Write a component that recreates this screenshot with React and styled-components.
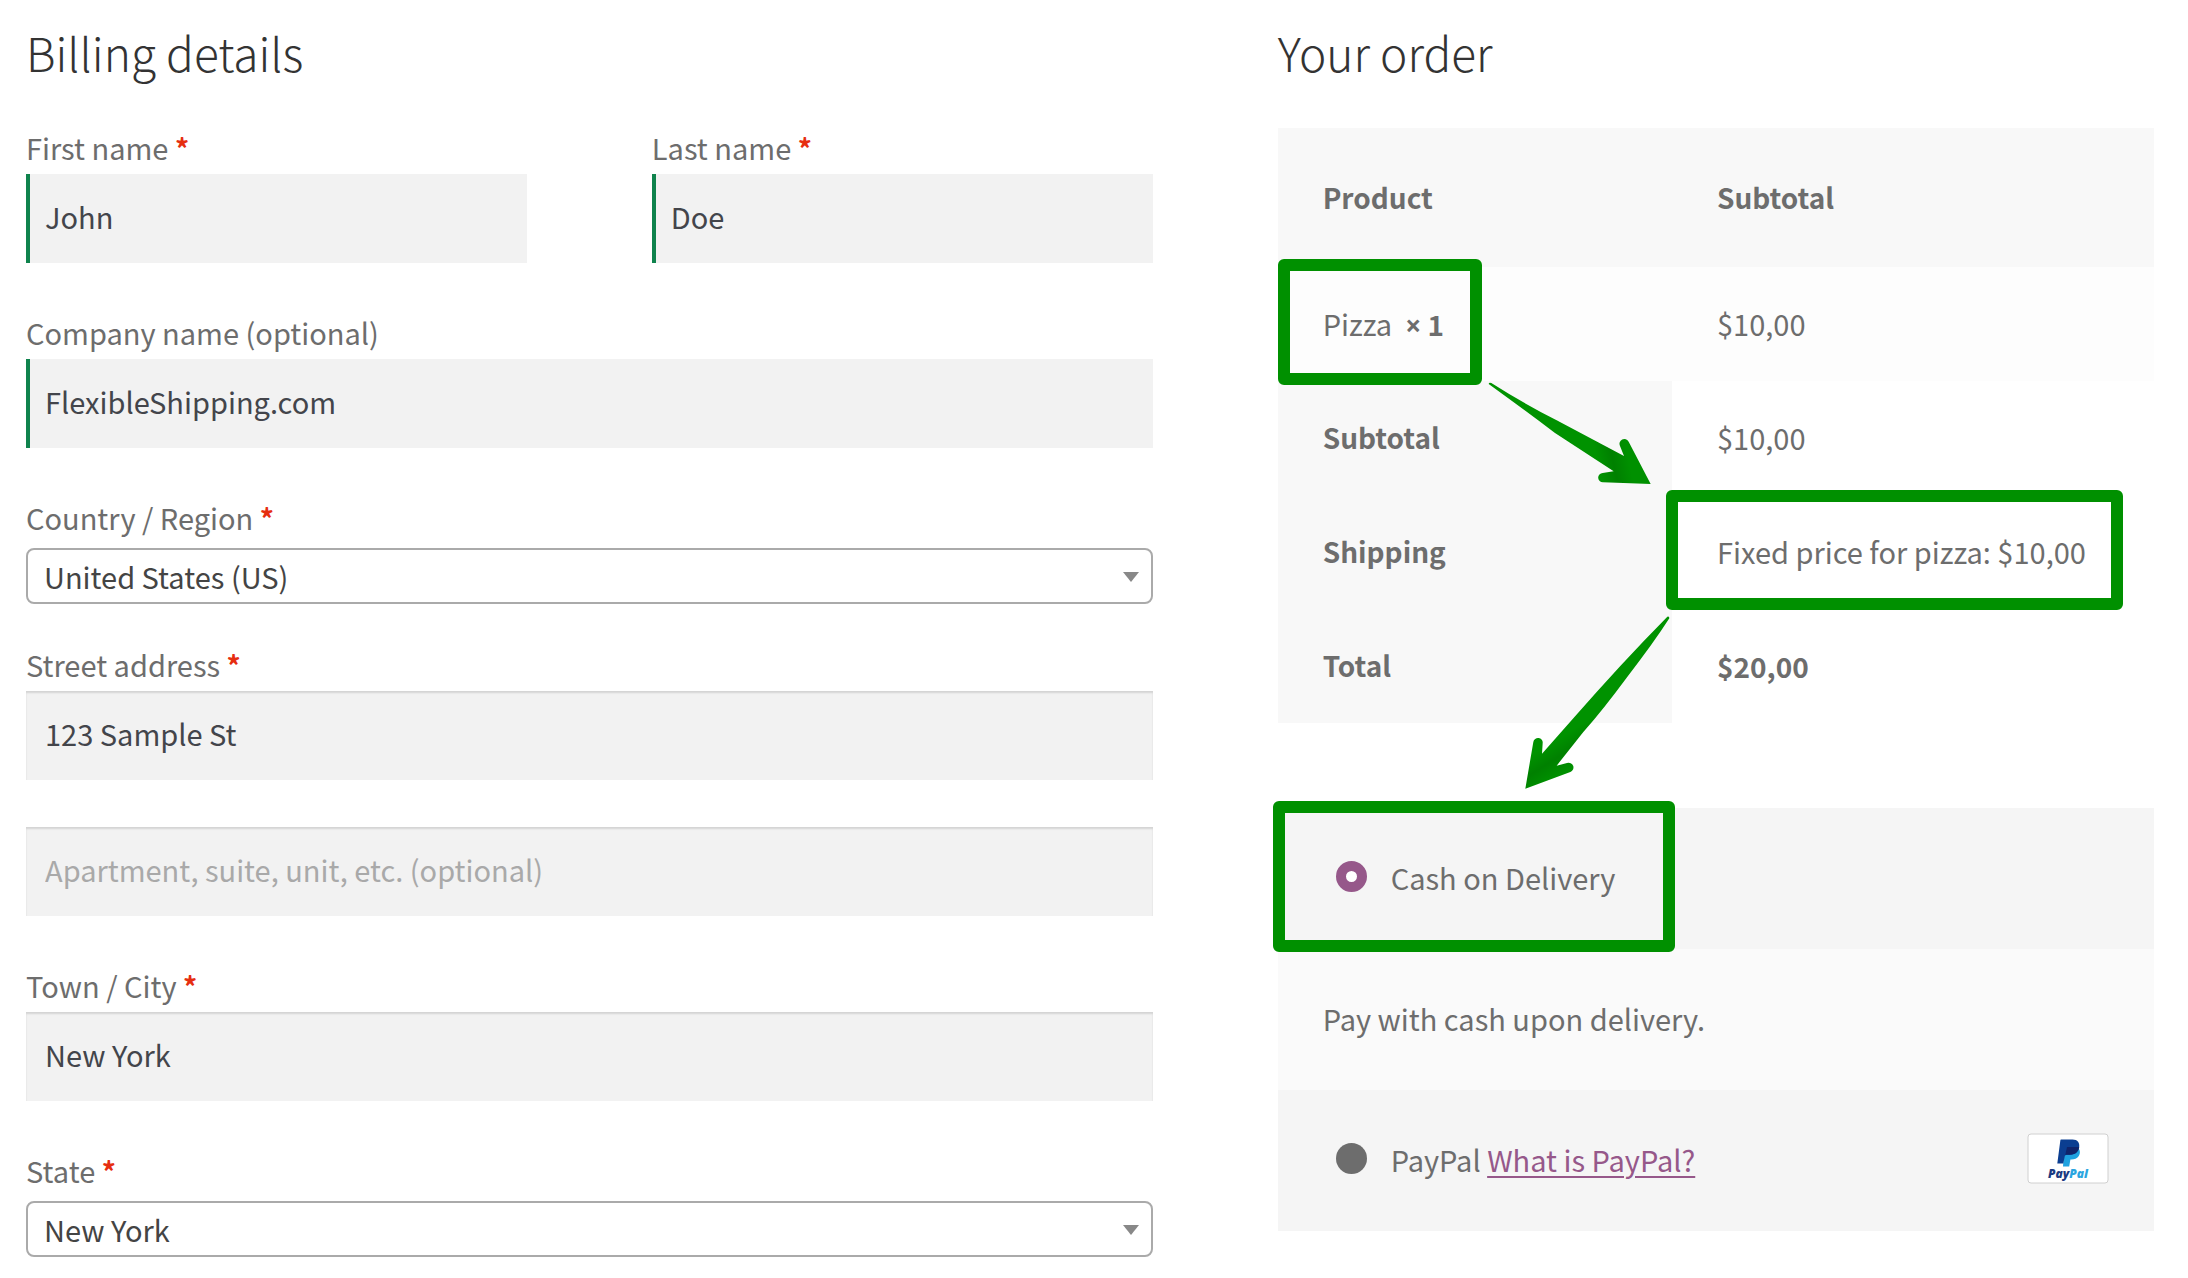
import React, { useState } from 'react'
import styled, { createGlobalStyle, css } from 'styled-components'

const items = [{ id: 1, name: 'Pizza', quantity: 1, total: '$10,00' }]

const countries = ['United States (US)', 'Canada', 'Poland']
const states = ['New York', 'California', 'Texas']

const Field = ({ id, label, required, children, ...rest }) => (
  <FormRow {...rest}>
    <Label htmlFor={id}>
      {label} {required && <Required title='required'>*</Required>}
    </Label>
    {children}
  </FormRow>
)

const SelectBox = ({ id, options, value, onChange }) => (
  <SelectWrap>
    <Select id={id} name={id} value={value} onChange={onChange}>
      {options.map((option) => (
        <option key={option}>{option}</option>
      ))}
    </Select>
    <Caret />
  </SelectWrap>
)

const PayPalMark = () => (
  <PayPalCard viewBox='0 0 82 51' role='img' aria-label='PayPal'>
    <rect x='1' y='1' width='80' height='49' rx='3' fill='#fff' stroke='#d0d0d0' strokeWidth='1' />
    <path d='M37.5 14 h12.500 c3.200 2.200 3.800 6 1.600 9.300 c-1.600 2.300 -4.200 3.200 -7.200 3.200 h-1 l-1.200 7 h-6.200 z' fill='#1fa2e0' />
    <path d='M34.200 6.500 h11.300 c5 0 7.700 3.500 6.600 8.200 c-1.100 5 -4.700 7 -9.300 7 h-3.300 c-1 0 -1.500 .6 -1.700 1.400 l-1.500 7.400 h-6 l3 -22.700 c.1 -.8 .4 -1.300 .9 -1.300 z' fill='#0b3e91' />
    <path d='M40 14 h12.200 c-1 5.500 -4.700 7.700 -9.400 7.700 h-3.300 c-.6 0 -1 .3 -1.300 .7 z' fill='#10246a' />
    <text x='41' y='45' textAnchor='middle' fontSize='12'>
      <tspan fill='#1b3a80'>Pay</tspan>
      <tspan fill='#2aa5e0'>Pal</tspan>
    </text>
  </PayPalCard>
)

const Arrows = () => (
  <ArrowLayer viewBox='126 60 594 1260' aria-hidden='true'>
    <defs>
      <linearGradient id='down' gradientUnits='userSpaceOnUse' x1='480' y1='340' x2='570' y2='320'>
        <stop offset='0' stopColor='#009200' />
        <stop offset='.5' stopColor='#008000' />
        <stop offset='1' stopColor='#009000' />
      </linearGradient>
      <linearGradient id='back' gradientUnits='userSpaceOnUse' x1='300' y1='1170' x2='350' y2='1250'>
        <stop offset='0' stopColor='#009200' />
        <stop offset='.5' stopColor='#008000' />
        <stop offset='1' stopColor='#009000' />
      </linearGradient>
    </defs>
    <path
      fill='url(#down)'
      d='M146 72 Q147 66 154 69 Q250 130 350 181 L552 288 L540 258 A14 14 0 0 1 566 245 L632 372 L489 367 A14 14 0 0 1 488 339 L521 334 L345 219 Q240 140 146 72 Z'
    />
    <path
      fill='url(#back)'
      d='M682 770 Q688 768 688 775 Q640 850 560 953 Q490 1048 430 1116 L350 1217 L381 1209 A14 14 0 0 1 391 1236 L256 1286 L280 1146 A14 14 0 0 1 308 1150 L306 1181 L400 1075 Q540 914 682 770 Z'
    />
  </ArrowLayer>
)

export default function App() {
  const [form, setForm] = useState({
    firstName: 'John',
    lastName: 'Doe',
    company: 'FlexibleShipping.com',
    country: 'United States (US)',
    street: '123 Sample St',
    apartment: '',
    city: 'New York',
    state: 'New York',
  })
  const [payment, setPayment] = useState('cod')

  // every field is keyed by its id
  const bind = (id) => ({
    id,
    name: id,
    value: form[id],
    onChange: (e) => setForm({ ...form, [id]: e.target.value }),
  })

  return (
    <>
      <GlobalStyle />
      <Checkout>
        <section>
          <Heading>Billing details</Heading>
          <NameRow>
            <Field id='firstName' label='First name' required>
              <Input type='text' $valid {...bind('firstName')} />
            </Field>
            <Field id='lastName' label='Last name' required>
              <Input type='text' $valid {...bind('lastName')} />
            </Field>
          </NameRow>
          <Field id='company' label='Company name (optional)'>
            <Input type='text' $valid {...bind('company')} />
          </Field>
          <Field id='country' label='Country / Region' required $gap='35px'>
            <SelectBox options={countries} {...bind('country')} />
          </Field>
          <Field id='street' label='Street address' required $gap='47px'>
            <Input type='text' {...bind('street')} />
          </Field>
          <FormRow>
            <Input
              type='text'
              aria-label='Apartment, suite, unit, etc. (optional)'
              placeholder='Apartment, suite, unit, etc. (optional)'
              {...bind('apartment')}
            />
          </FormRow>
          <Field id='city' label='Town / City' required>
            <Input type='text' {...bind('city')} />
          </Field>
          <Field id='state' label='State' required $gap='0'>
            <SelectBox options={states} {...bind('state')} />
          </Field>
        </section>

        <Order>
          <Heading $order>Your order</Heading>
          <OrderTable>
            <thead>
              <tr>
                <th>Product</th>
                <th>Subtotal</th>
              </tr>
            </thead>
            <tbody>
              {items.map((item) => (
                <tr key={item.id}>
                  <td>
                    {item.name}&nbsp;{' '}
                    <strong>
                      <Times>×</Times> {item.quantity}
                    </strong>
                    <ProductMark />
                  </td>
                  <td>{item.total}</td>
                </tr>
              ))}
            </tbody>
            <tfoot>
              <tr>
                <th>Subtotal</th>
                <td>$10,00</td>
              </tr>
              <tr>
                <th>Shipping</th>
                <td>
                  Fixed price for pizza: $10,00
                  <ShippingMark />
                </td>
              </tr>
              <tr>
                <th>Total</th>
                <td>
                  <strong>$20,00</strong>
                </td>
              </tr>
            </tfoot>
          </OrderTable>

          <Payment>
            <Method>
              <Radio
                type='radio'
                name='payment'
                id='cod'
                checked={payment === 'cod'}
                onChange={() => setPayment('cod')}
              />
              <label htmlFor='cod'>Cash on Delivery</label>
              <PaymentMark />
            </Method>
            <PaymentInfo>Pay with cash upon delivery.</PaymentInfo>
            <Method>
              <Radio
                type='radio'
                name='payment'
                id='paypal'
                checked={payment === 'paypal'}
                onChange={() => setPayment('paypal')}
              />
              <span>
                <label htmlFor='paypal'>PayPal</label> <a href='#paypal'>What is PayPal?</a>
              </span>
              <PayPalMark />
            </Method>
          </Payment>
          <Arrows />
        </Order>
      </Checkout>
    </>
  )
}

const GlobalStyle = createGlobalStyle`
  * {
    box-sizing: border-box;
  }
  body {
    margin: 0;
    background: #fff;
    color: #6d6d6d;
    font-family: 'Noto Sans CJK SC', 'Noto Sans', sans-serif;
    font-size: 29px;
    line-height: 52px;
  }
  a {
    color: #96588a;
    text-decoration: underline;
    text-decoration-thickness: 2px;
    text-underline-offset: 4px;
  }
`

const Checkout = styled.main`
  display: grid;
  grid-template-columns: 9fr 7fr;
  column-gap: 125px;
  align-items: start;
  padding: 20px 34px 20px 26px;
`

const Heading = styled.h3`
  margin: 0 0 ${(props) => (props.$order ? '44px' : '38px')};
  color: #333;
  font-size: 46px;
  font-weight: 300;
  line-height: 64px;
`

const NameRow = styled.div`
  display: grid;
  grid-template-columns: 1fr 1fr;
  column-gap: 125px;
`

const FormRow = styled.div`
  display: flex;
  flex-direction: column;
  margin-bottom: ${(props) => props.$gap || '44px'};
`

const Label = styled.label`
  display: block;
  padding-bottom: 2px;
  line-height: 50px;
`

const Required = styled.span`
  color: #e62e10;
  font-size: 28px;
  font-weight: 700;
  line-height: 1;
`

const Input = styled.input`
  width: 100%;
  height: 89px;
  padding: 0 19px 5px;
  border: 0;
  border-radius: 0;
  outline: 0;
  background: #f2f2f2;
  box-shadow: inset 0 2px 2px rgba(0, 0, 0, 0.125);
  color: #43454b;
  font: inherit;

  ${(props) =>
    props.$valid &&
    css`
      box-shadow: inset 4px 0 0 #0f834d;
    `}

  &::placeholder {
    color: #a9a9a9;
    opacity: 1;
  }
`

const SelectWrap = styled.div`
  position: relative;
  margin-top: 4px;
`

const Select = styled.select`
  display: block;
  width: 100%;
  height: 56px;
  padding: 0 56px 0 16px;
  border: 2px solid #aaa;
  border-radius: 8px;
  outline: 0;
  appearance: none;
  background: #fff;
  color: #444;
  font: inherit;
`

const Caret = styled.span`
  position: absolute;
  top: 24px;
  right: 14px;
  border: solid transparent;
  border-width: 10px 8px 0;
  border-top-color: #888;
  pointer-events: none;
`

const Order = styled.section`
  position: relative;
`

const OrderTable = styled.table`
  width: 100%;
  margin-bottom: 85px;
  border-collapse: collapse;
  table-layout: fixed;

  th,
  td {
    position: relative;
    padding: 30px 45px 32px;
    text-align: left;
    white-space: nowrap;
  }
  th {
    background: #f8f8f8;
    font-weight: 700;
  }
  th,
  strong {
    font-size: 28px;
  }
  strong {
    line-height: 1;
  }
  thead th {
    height: 139px;
  }
  thead th:first-child {
    width: 45%;
  }
  tbody td {
    background: #fdfdfd;
  }
`

const Times = styled.span`
  font-family: 'Noto Sans', sans-serif;
`

const Payment = styled.div`
  background: #f5f5f5;
`

const Method = styled.div`
  position: relative;
  display: flex;
  align-items: center;
  height: 141px;
  padding: 0 45px 4px 58px;

  svg {
    margin-left: auto;
  }
`

const PaymentInfo = styled.div`
  padding: 44px 45px 46px;
  background: #fafafa;
  line-height: 51px;
`

const Radio = styled.input`
  width: 31px;
  height: 31px;
  margin: 0 24px 0 0;
  border-radius: 50%;
  appearance: none;
  background: #6d6d6d;

  &:checked {
    background: #fff;
    border: 10px solid #96588a;
  }
`

const PayPalCard = styled.svg`
  width: 82px;
  height: 51px;

  text {
    font-family: 'Open Sans', sans-serif;
    font-style: italic;
    font-weight: 800;
  }
`

// green call-outs drawn over the order
const Mark = styled.span`
  position: absolute;
  z-index: 1;
  border: 12px solid #009000;
  border-radius: 6px;
  pointer-events: none;
`

const ProductMark = styled(Mark)`
  top: -8px;
  left: 0;
  width: 204px;
  height: 126px;
`

const ShippingMark = styled(Mark)`
  top: -5px;
  left: -6px;
  width: 457px;
  height: 120px;
`

const PaymentMark = styled(Mark)`
  top: -7px;
  left: -5px;
  width: 402px;
  height: 151px;
`

const ArrowLayer = styled.svg`
  position: absolute;
  top: 360px;
  left: 204px;
  width: 198px;
  height: 420px;
  pointer-events: none;
`
